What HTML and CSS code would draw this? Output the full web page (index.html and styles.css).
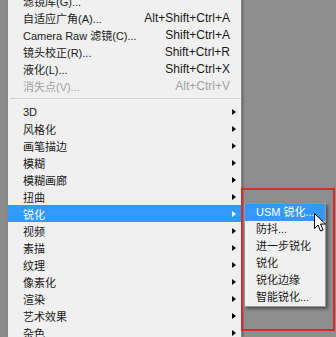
FILE: index.html
```html
<!DOCTYPE html>
<html lang="zh-CN">
<head>
    <meta charset="UTF-8">
    <title>滤镜菜单</title>
    <link rel="stylesheet" href="styles.css">
</head>
<body>
    <div class="strip"></div>
    <div class="menu">
        <div class="item"><span class="label">滤镜库(G)...</span></div>
        <div class="item"><span class="label">自适应广角(A)...</span><span class="key">Alt+Shift+Ctrl+A</span></div>
        <div class="item"><span class="label">Camera Raw 滤镜(C)...</span><span class="key">Shift+Ctrl+A</span></div>
        <div class="item"><span class="label">镜头校正(R)...</span><span class="key">Shift+Ctrl+R</span></div>
        <div class="item"><span class="label">液化(L)...</span><span class="key">Shift+Ctrl+X</span></div>
        <div class="item disabled"><span class="label">消失点(V)...</span><span class="key">Alt+Ctrl+V</span></div>
        <div class="sep"></div>
        <div class="item sub"><span class="label">3D</span><i class="arrow"></i></div>
        <div class="item sub"><span class="label">风格化</span><i class="arrow"></i></div>
        <div class="item sub"><span class="label">画笔描边</span><i class="arrow"></i></div>
        <div class="item sub"><span class="label">模糊</span><i class="arrow"></i></div>
        <div class="item sub"><span class="label">模糊画廊</span><i class="arrow"></i></div>
        <div class="item sub"><span class="label">扭曲</span><i class="arrow"></i></div>
        <div class="item sub active"><span class="label">锐化</span><i class="arrow"></i></div>
        <div class="item sub"><span class="label">视频</span><i class="arrow"></i></div>
        <div class="item sub"><span class="label">素描</span><i class="arrow"></i></div>
        <div class="item sub"><span class="label">纹理</span><i class="arrow"></i></div>
        <div class="item sub"><span class="label">像素化</span><i class="arrow"></i></div>
        <div class="item sub"><span class="label">渲染</span><i class="arrow"></i></div>
        <div class="item sub"><span class="label">艺术效果</span><i class="arrow"></i></div>
        <div class="item sub"><span class="label">杂色</span><i class="arrow"></i></div>
    </div>
    <div class="canvas">
        <div class="mark">
            <div class="submenu">
                <div class="subitem active">USM 锐化...</div>
                <div class="subitem">防抖...</div>
                <div class="subitem">进一步锐化</div>
                <div class="subitem">锐化</div>
                <div class="subitem">锐化边缘</div>
                <div class="subitem">智能锐化...</div>
                <svg class="cursor" width="12" height="19" viewBox="0 0 12 19">
                    <path d="M0.5 0.5 L0.5 15.5 L4 12 L6.5 18 L9 17 L6.5 11 L11.5 11 Z" fill="#fff" stroke="#000" stroke-width="1" stroke-linejoin="miter"/>
                </svg>
            </div>
        </div>
    </div>
</body>
</html>
```

FILE: styles.css
```css
body {
    margin: 0;
    width: 336px;
    height: 337px;
    overflow: hidden;
    display: flex;
    background-color: #8e8e8e;
    font-family: 'Liberation Sans', 'Noto Sans CJK SC', sans-serif;
    font-size: 11px;
    color: #1a1a1a;
}
.strip {
    width: 8px;
    flex-shrink: 0;
    background-color: #8a8a8a;
}
.menu {
    width: 233px;
    flex-shrink: 0;
    margin-top: -8px;
    background-color: #f0f0f0;
    border-right: 1px solid #8a8a8a;
    box-shadow: 1px 0 2px rgba(0, 0, 0, 0.35);
    position: relative;
    z-index: 1;
}
.item {
    height: 17px;
    display: flex;
    align-items: center;
    padding: 0 11px 0 15px;
    white-space: nowrap;
}
.item .label {
    flex: 1;
}
.item .key {
    font-size: 12px;
}
.item.sub {
    padding-right: 5px;
}
.item.disabled {
    color: #a3a3a3;
}
.item.active {
    background-color: #3399ff;
    color: #fff;
}
.arrow {
    width: 0;
    height: 0;
    border-left: 4px solid #000;
    border-top: 3.5px solid transparent;
    border-bottom: 3.5px solid transparent;
}
.item.active .arrow {
    border-left-color: #fff;
}
.sep {
    height: 1px;
    margin: 4px 0 4px 2px;
    background-color: #d2d2d2;
}
.canvas {
    flex: 1;
    padding-top: 188px;
}
.mark {
    width: 89px;
    height: 126px;
    margin-left: -1px;
    border: 2px solid #dc2a2a;
    padding: 13px 0 0 1px;
    position: relative;
    z-index: 2;
}
.submenu {
    width: 80px;
    background-color: #f0f0f0;
    border: 1px solid #979797;
    box-shadow: 2px 2px 3px rgba(0, 0, 0, 0.45);
    position: relative;
}
.subitem {
    height: 17px;
    line-height: 17px;
    padding-left: 11px;
    white-space: nowrap;
}
.subitem.active {
    background-color: #3399ff;
    color: #fff;
}
.cursor {
    position: absolute;
    left: 69px;
    top: 9px;
}
```
